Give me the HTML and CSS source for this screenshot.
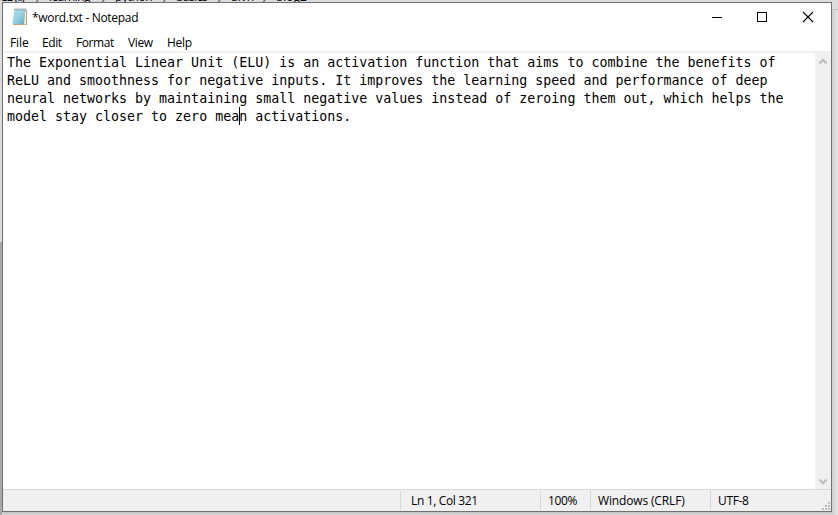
FILE: index.html
```
<!DOCTYPE html>
<html lang="en">
<head>
<meta charset="utf-8">
<title>*word.txt - Notepad</title>
<link rel="stylesheet" href="styles.css">
</head>
<body>
<div class="behind">
  <div class="crumbs"><span class="c1">CE (I:)</span><span class="sep">›</span><span class="c2">learning</span><span class="sep">›</span><span class="c3">python</span><span class="sep">›</span><span class="c4">basics</span><span class="sep">›</span><span class="c5">alvn</span><span class="sep">›</span><span>blog2</span></div>
</div>
<main class="window">
  <header class="titlebar">
    <svg class="app-icon" width="16" height="18" viewBox="0 0 16 18">
      <defs>
        <linearGradient id="sheet" x1="0" y1="0" x2="1" y2="1"><stop offset="0" stop-color="#b4e3ec"/><stop offset=".5" stop-color="#9bd3e2"/><stop offset="1" stop-color="#5fa9c4"/></linearGradient>
      </defs>
      <path d="M3.5 2H15v15H1z" fill="#b9a67a"/>
      <path d="M12.500 3H14v13l-2 .5z" fill="#f3eee0"/>
      <path d="M2.500 2h10.800L12 16H.3z" fill="url(#sheet)"/>
      <path d="M2 5.500h10.700M1.800 8h10.600M1.500 10.500h10.600M1.200 13h10.600" stroke="#7fbdd0" stroke-width=".5"/>
      <path d="M2.500 1.500h12" stroke="#52798a" stroke-width="2" stroke-dasharray="1 1"/>
    </svg>
    <h1 class="title">*word.txt - Notepad</h1>
    <svg class="controls" width="102" height="12" viewBox="0 0 102 12" shape-rendering="crispEdges">
      <path d="M0 6.5h10" stroke="#000"/>
      <path d="M45.5 1.5h9v9h-9z" fill="none" stroke="#000"/>
      <path d="M91 1l10 10M101 1L91 11" stroke="#000" stroke-width="1.1" shape-rendering="auto"/>
    </svg>
  </header>
  <nav class="menu"><span class="m1">File</span><span class="m2">Edit</span><span class="m3">Format</span><span class="m4">View</span><span class="m5">Help</span></nav>
  <section class="editor">
    <div class="text">The Exponential Linear Unit (ELU) is an activation function that aims to combine the benefits of
ReLU and smoothness for negative inputs. It improves the learning speed and performance of deep
neural networks by maintaining small negative values instead of zeroing them out, which helps the
model stay closer to zero mean activations.<span class="caret"></span></div>
    <div class="scrollbar">
      <svg width="8" height="7" viewBox="0 0 8 7"><path d="M.5 5.500L4 2l3.500 3.500" fill="none" stroke="#bfbfbf" stroke-width="2.300"/></svg>
      <svg width="8" height="7" viewBox="0 0 8 7"><path d="M.5 1.500L4 5l3.500-3.500" fill="none" stroke="#bfbfbf" stroke-width="2.300"/></svg>
    </div>
  </section>
  <footer class="status">
    <span class="cell blank"></span>
    <span class="cell position"><b>Ln 1, Col 321</b></span>
    <span class="cell zoom"><b>100%</b></span>
    <span class="cell eol"><b>Windows (CRLF)</b></span>
    <span class="cell encoding"><b>UTF-8</b></span>
    <svg class="grip" width="8" height="8" viewBox="0 0 8 8" shape-rendering="crispEdges"><path fill="#bfbfbf" d="M6 0h2v2H6zM3 3h2v2H3zM6 3h2v2H6zM0 6h2v2H0zM3 6h2v2H3zM6 6h2v2H6z"/></svg>
  </footer>
</main>
</body>
</html>
```
FILE: styles.css
```
* { box-sizing: border-box; }
body {
  margin: 0;
  width: 838px;
  height: 515px;
  position: relative;
  overflow: hidden;
  background: #d0d0d0;
  font: 12px/16px "Open Sans", "Noto Sans", sans-serif;
  color: #000;
}
.behind {
  position: absolute;
  inset: 0;
  background:
    linear-gradient(90deg, #cfcfcf, #e6e6e6) right 10px / 6px 505px no-repeat,
    linear-gradient(#a9a9a9, #a9a9a9) 0 242px / 2px 273px no-repeat,
    linear-gradient(#c4c4c4, #dadada) 0 512px / 838px 3px no-repeat,
    linear-gradient(#c4c4c4, #c4c4c4) right 9px / 6px 1px no-repeat,
    #dcdcdc;
}
.crumbs {
  display: flex;
  height: 2px;
  line-height: 16px;
  white-space: nowrap;
}
.crumbs span { flex: none; margin-top: -11px; height: 16px; }
.crumbs .sep { width: 23px; text-align: center; color: #555; font-size: 15px; }
.crumbs .c1 { width: 26px; letter-spacing: -1px; }
.crumbs .c2 { width: 43px; letter-spacing: -.6px; }
.crumbs .c3 { width: 38px; letter-spacing: -.4px; }
.crumbs .c4 { width: 32px; letter-spacing: -.5px; }
.crumbs .c5 { width: 22px; }
.window {
  position: relative;
  display: flex;
  flex-direction: column;
  width: 830px;
  height: 510px;
  margin: 2px 0 0 2px;
  border: 1px solid #707070;
  background: #fff;
}
.titlebar {
  display: flex;
  height: 30px;
  flex: none;
  align-items: flex-start;
  padding: 5px 17px 0 9px;
}
.app-icon { flex: none; }
.title {
  margin: 2px 0 0 4px;
  flex: 1;
  font-size: 12px;
  font-weight: 400;
  letter-spacing: -.31px;
}
.controls { margin-top: 3px; flex: none; }
.menu {
  display: flex;
  flex: none;
  height: 18px;
  padding-left: 7px;
}
.menu span { margin-top: 2px; }
.m1 { width: 32px; letter-spacing: -.1px; }
.m2 { width: 34px; letter-spacing: -.4px; }
.m3 { width: 52px; letter-spacing: -.4px; }
.m4 { width: 39px; letter-spacing: -.4px; }
.m5 { width: 40px; letter-spacing: -.3px; }
.editor {
  display: flex;
  flex: 1;
  min-height: 0;
  border-top: 2px solid #f0f0f0;
}
.text {
  position: relative;
  flex: 1;
  padding: 1px 0 0 4px;
  font: 13.3px/18px "DejaVu Sans Mono", monospace;
  white-space: pre;
}
.caret {
  position: absolute;
  left: 236px;
  top: 54px;
  width: 1px;
  height: 18px;
  background: #000;
}
.scrollbar {
  display: flex;
  flex-direction: column;
  justify-content: space-between;
  align-items: center;
  width: 16px;
  padding: 5px 0 4px;
  background: #f0f0f0;
}
.status {
  display: flex;
  flex: none;
  height: 22px;
  border-top: 1px solid #d7d7d7;
  background: #f0f0f0;
}
.cell {
  height: 19px;
  margin-top: 1px;
  border-left: 1px solid #d7d7d7;
}
.cell b { display: block; margin: 2px 0 0 7px; font-weight: 400; letter-spacing: -.35px; white-space: nowrap; }
.blank { width: 397px; border: 0; }
.position { width: 140px; }
.position b { margin-left: 10px; }
.zoom { width: 50px; }
.eol { width: 120px; }
.eol b { letter-spacing: -.15px; }
.encoding { flex: 1; }
.grip { align-self: flex-end; margin: 0 1px 1px 0; }
```
